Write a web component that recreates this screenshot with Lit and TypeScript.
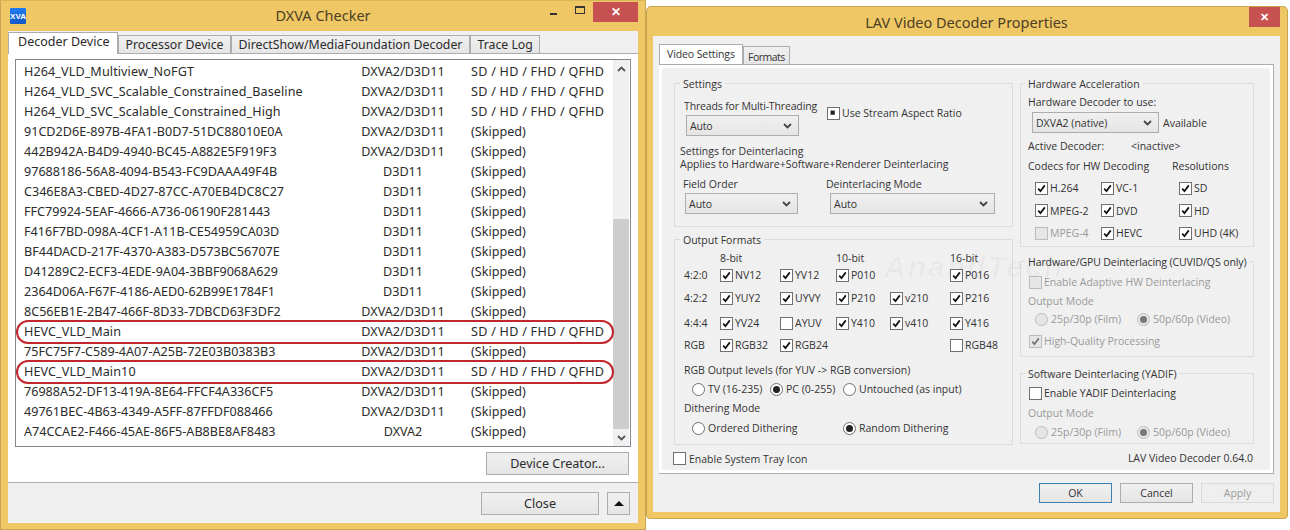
import { LitElement, html, css, svg } from "lit";
import { customElement } from "lit/decorators.js";

const listRows: [string, string, boolean, boolean?][] = [
  ["H264_VLD_Multiview_NoFGT", "DXVA2/D3D11", true],
  ["H264_VLD_SVC_Scalable_Constrained_Baseline", "DXVA2/D3D11", true],
  ["H264_VLD_SVC_Scalable_Constrained_High", "DXVA2/D3D11", true],
  ["91CD2D6E-897B-4FA1-B0D7-51DC88010E0A", "DXVA2/D3D11", false],
  ["442B942A-B4D9-4940-BC45-A882E5F919F3", "DXVA2/D3D11", false],
  ["97688186-56A8-4094-B543-FC9DAAA49F4B", "D3D11", false],
  ["C346E8A3-CBED-4D27-87CC-A70EB4DC8C27", "D3D11", false],
  ["FFC79924-5EAF-4666-A736-06190F281443", "D3D11", false],
  ["F416F7BD-098A-4CF1-A11B-CE54959CA03D", "D3D11", false],
  ["BF44DACD-217F-4370-A383-D573BC56707E", "D3D11", false],
  ["D41289C2-ECF3-4EDE-9A04-3BBF9068A629", "D3D11", false],
  ["2364D06A-F67F-4186-AED0-62B99E1784F1", "D3D11", false],
  ["8C56EB1E-2B47-466F-8D33-7DBCD63F3DF2", "DXVA2/D3D11", false],
  ["HEVC_VLD_Main", "DXVA2/D3D11", true, true],
  ["75FC75F7-C589-4A07-A25B-72E03B0383B3", "DXVA2/D3D11", false],
  ["HEVC_VLD_Main10", "DXVA2/D3D11", true, true],
  ["76988A52-DF13-419A-8E64-FFCF4A336CF5", "DXVA2/D3D11", false],
  ["49761BEC-4B63-4349-A5FF-87FFDF088466", "DXVA2/D3D11", false],
  ["A74CCAE2-F466-45AE-86F5-AB8BE8AF8483", "DXVA2", false],
];

const chev = (c = "#444") => html`<svg class="chev" width="9" height="6" viewBox="0 0 9 6"><path d="M1 1 L4.5 4.5 L8 1" fill="none" stroke=${c} stroke-width="1.8"/></svg>`;
const tick = svg`<path d="M2.6 6.6 L5.3 9.6 L10.4 2.8" fill="none" stroke="currentColor" stroke-width="2"/>`;

type CbState = "on" | "off" | "dis" | "dison";
const cb = (label: string, state: CbState = "on") => html`<span class="cb ${state === "dis" || state === "dison" ? "disabled" : ""}">
  <svg class="box ${state}" width="13" height="13" viewBox="0 0 13 13">${state === "on" || state === "dison" ? tick : ""}</svg><span>${label}</span></span>`;
const radio = (label: string, on = false, dis = false) => html`<span class="rd ${dis ? "disabled" : ""}">
  <span class="dot ${on ? "on" : ""}"></span><span>${label}</span></span>`;
const select = (text: string, cls: string) => html`<span class="select ${cls}"><span>${text}</span>${chev()}</span>`;

@customElement("dxva-window")
class DxvaWindow extends LitElement {
  static styles = css`
    :host { display: block; position: absolute; left: 0; top: 0; width: 646px; height: 530px; box-sizing: border-box;
      background: #efc764; border: 1px solid #c9a552; border-top-color: #d9b65c; border-bottom: 1px solid #c9a552;
      font-family: "Noto Sans", sans-serif; color: #2b2b2b; font-size: 12.6px; padding: 0 7px 6px 7px; }
    .title { height: 30px; box-sizing: border-box; padding-bottom: 2px; display: flex; align-items: center; justify-content: center; font-size: 14.5px; color: #4d4126; position: relative; }
    .app { position: absolute; left: 2px; top: 7px; width: 16px; height: 16px; background: linear-gradient(#1c7df0, #1456c8); color: #fff; font: bold 8px "Liberation Sans", sans-serif; display: flex; align-items: center; justify-content: center; border-radius: 1px; }
    .ctrls { position: absolute; right: 0; top: 1px; display: flex; align-items: center; height: 20px; }
    .min { width: 7px; height: 2px; background: #333; margin: 3px 18px 0 0; }
    .max { width: 10px; height: 8px; box-sizing: border-box; border: 1px solid #333; border-top-width: 2px; margin: -4px 8px 0 0; }
    .close { width: 45px; height: 20px; background: #c75050; color: #fff; font: bold 12px "Liberation Sans", sans-serif; display: flex; align-items: center; justify-content: center; }
    .content { background: #f0f0f0; height: 492px; display: flex; flex-direction: column; }
    .tabs { height: 22px; display: flex; align-items: flex-end; background: #f0f0f0; margin-top: 1px; font-size: 12.3px; }
    .tab { height: 19px; padding: 0 6.5px 2px; display: flex; align-items: center; background: linear-gradient(#f0f0f0, #e5e5e5); border: 1px solid #acacac; border-bottom: none; box-sizing: border-box; white-space: nowrap; }
    .tab.active { height: 22px; width: 110px; background: #fff; padding: 0 0 5px 9px; font-size: 12.5px; position: relative; z-index: 1; }
    .panel { flex: none; height: 430px; box-sizing: border-box; background: #fff; border-top: 1px solid #acacac; border-bottom: 1px solid #acacac; padding: 5px 7px 0 7px; margin-top: -1px; }
    .list { height: 388px; box-sizing: border-box; border: 1px solid #828790; display: flex; background: #fff; }
    .rows { flex: 1; padding: 2px 0 0 0; }
    .row { height: 20px; display: grid; grid-template-columns: 337px 84px 1fr; padding-left: 8px; align-items: center; position: relative; line-height: 20px; white-space: nowrap; }
    .row > :nth-child(2) { text-align: center; }
    .row > :nth-child(3) { padding-left: 26px; }
    .row.named > :first-child { letter-spacing: .1px; }
    .ok { letter-spacing: .25px; }
    .row.mark::after { content: ""; position: absolute; left: 0; right: -1px; top: -2px; bottom: -2px; border: 2px solid #c1272d; border-radius: 12px; }
    .sb { width: 16px; margin: 0 1px 0 0; background: #f0f0f0; display: flex; flex-direction: column; }
    .sb .arrow { height: 17px; display: flex; align-items: center; justify-content: center; }
    .sb .space { height: 142px; }
    .sb .thumb { flex: 1; background: #cdcdcd; }
    .btnrow { display: flex; justify-content: flex-end; padding: 5px 2px 0 0; }
    .btn { display: flex; align-items: center; justify-content: center; box-sizing: border-box; height: 23px; border: 1px solid #adadad; background: linear-gradient(#f0f0f0, #e5e5e5); }
    .creator { width: 143px; }
    .footer { flex: 1; display: flex; justify-content: flex-end; gap: 8px; padding: 9px 8px 0 0; }
    .closebtn { width: 118px; }
    .up { width: 23px; }
    .tri { width: 0; height: 0; border-left: 5px solid transparent; border-right: 5px solid transparent; border-bottom: 5px solid #111; }
  `;
  render() {
    return html`
      <div class="title"><span class="app">XVA</span>DXVA Checker
        <span class="ctrls"><span class="min"></span><span class="max"></span><span class="close">✕</span></span></div>
      <div class="content">
        <div class="tabs"><span class="tab active">Decoder Device</span><span class="tab">Processor Device</span><span class="tab">DirectShow/MediaFoundation Decoder</span><span class="tab">Trace Log</span></div>
        <div class="panel">
          <div class="list">
            <div class="rows">${listRows.map(([n, t, ok, m]) => html`<div class="row ${m ? "mark" : ""} ${ok ? "named" : ""}"><span>${n}</span><span>${t}</span><span class=${ok ? "ok" : ""}>${ok ? "SD / HD / FHD / QFHD" : "(Skipped)"}</span></div>`)}</div>
            <div class="sb">
              <div class="arrow"><svg width="9" height="6" viewBox="0 0 9 6"><path d="M1 5 L4.5 1.5 L8 5" fill="none" stroke="#555" stroke-width="1.8"/></svg></div>
              <div class="space"></div><div class="thumb"></div>
              <div class="arrow">${chev("#555")}</div>
            </div>
          </div>
          <div class="btnrow"><span class="btn creator">Device Creator...</span></div>
        </div>
        <div class="footer"><span class="btn closebtn">Close</span><span class="btn up"><span class="tri"></span></span></div>
      </div>`;
  }
}

@customElement("lav-window")
class LavWindow extends LitElement {
  static styles = css`
    :host { display: block; position: absolute; left: 646px; top: 6px; width: 642px; height: 513px; box-sizing: border-box;
      background: #efc764; border: 1px solid #c9a552; border-radius: 5px 5px 4px 4px; padding: 0 7px 6px 6px;
      font-family: "Open Sans", sans-serif; color: #333; font-size: 10.5px; }
    .title { height: 29px; display: flex; align-items: center; justify-content: center; font-size: 14.5px; font-family: "Noto Sans", sans-serif; color: #4d4126; position: relative; }
    .x { position: absolute; right: 0; top: 0; width: 31px; height: 20px; background: #c75050; color: #fff; font: bold 11px "Liberation Sans", sans-serif; display: flex; align-items: center; justify-content: center; }
    .content { background: #f0f0f0; height: 476px; box-sizing: border-box; padding: 8px 6px 0 6px; display: flex; flex-direction: column; }
    .tabs { height: 21px; display: flex; align-items: flex-end; }
    .tab { height: 19px; padding: 1px 4px 0; display: flex; align-items: center; border: 1px solid #acacac; border-bottom: none; box-sizing: border-box; background: linear-gradient(#f0f0f0, #e5e5e5); letter-spacing: -.5px; }
    .tab.active { height: 21px; width: 84px; background: #fff; padding: 0 0 3px 7px; letter-spacing: -.1px; }
    .panel { height: 410px; box-sizing: border-box; border: 1px solid #acacac; border-width: 1px 1px 1px 0; background: #f0f0f0; box-shadow: inset 0 0 0 3px #fff; margin-top: -1px; padding: 18px 19px 0 15px; position: relative; width: 615px; }
    .cols { display: grid; grid-template-columns: 339px 234px; column-gap: 7px; }
    .col { display: flex; flex-direction: column; }
    fieldset { margin: 0; padding: 0; border: 1px solid #dcdcdc; box-sizing: border-box; min-width: 0; }
    legend { padding: 0 3px; line-height: 14px; height: 12px; white-space: nowrap; }
    .g-settings { height: 150px; padding: 7px 0 0 5px; margin-top: -6px; }
    .g-settings legend { margin-left: 0; }
    .g-output { height: 212px; margin-top: 6px; padding: 0 0 0 9px; }
    .g-output legend { margin-left: -4px; }
    .g-hw { height: 170px; padding: 6px 0 0 7px; margin-top: -6px; }
    .g-gpu { height: 102px; margin-top: 8px; padding: 8px 0 0 7px; }
    .g-gpu legend { letter-spacing: -.1px; }
    .g-soft { height: 77px; margin-top: 10px; padding: 7px 0 0 7px; }
    .g-hw legend, .g-gpu legend, .g-soft legend { margin-left: -3px; }
    .cb, .rd { display: inline-flex; align-items: center; white-space: nowrap; gap: 2px; line-height: 14px; }
    .box { flex: none; background: #fff; border: 1px solid #707070; box-sizing: border-box; color: #111; }
    .box.dis, .box.dison { background: #e6e6e6; border-color: #bcbcbc; color: #777; }
    .dot { flex: none; width: 13px; height: 13px; box-sizing: border-box; border: 1px solid #707070; border-radius: 50%; background: #fff; display: inline-flex; align-items: center; justify-content: center; margin-right: 1px; }
    .dot.on::after { content: ""; width: 7px; height: 7px; border-radius: 50%; background: #222; }
    .disabled { color: #9a9a9a; }
    .disabled .dot { border-color: #bcbcbc; background: #e6e6e6; }
    .disabled .dot.on::after { background: #777; }
    .select { display: flex; align-items: center; justify-content: space-between; box-sizing: border-box; height: 21px; border: 1px solid #adadad; background: linear-gradient(#f0f0f0, #e5e5e5); padding: 0 6px 0 3px; }
    .s113 { width: 113px; } .s165 { width: 165px; } .s127 { width: 127px; }
    /* settings */
    .s-top { display: grid; grid-template-columns: 143px auto; height: 46px; padding-left: 4px; }
    .s-top > div:first-child { display: flex; flex-direction: column; gap: 2px; margin-top: 3px; letter-spacing: -.15px; }
    .indent { margin-left: 2px; }
    .indent2 { margin-left: 4px; }
    .s-top .cb { margin-top: 10px; }
    .s-note { margin: 3px 0 0 0; line-height: 13px; height: 26px; }
    .s-bot { display: grid; grid-template-columns: 143px auto; padding-left: 3px; margin-top: 6px; line-height: 14px; row-gap: 2px; }
    /* output */
    .fmt { display: grid; grid-template-columns: 36px 60px 56px 54px 60px 1fr; height: 102px; grid-template-rows: 12px 22px 24px 26px 18px; align-items: center; margin-top: 7px; }
    .line { line-height: 14px; }
    .radios { position: relative; display: grid; height: 14px; align-items: center; padding-left: 8px; }
    .r3 { grid-template-columns: 78px 73px 1fr; }
    .r2 { grid-template-columns: 151px 1fr; }
    .o1 { margin-top: 9px; } .o2 { margin-top: 5px; } .o3 { margin-top: 5px; } .o4 { margin-top: 6px; }
    /* hw */
    .codec { display: grid; grid-template-columns: 66px 78px 1fr; grid-auto-rows: 22.5px; padding-left: 7px; margin-top: 4px; align-items: center; }
    .active { display: grid; grid-template-columns: 103px 1fr; margin-top: 6px; line-height: 14px; }
    .codecs-h { display: grid; grid-template-columns: 144px 1fr; margin-top: 6px; line-height: 14px; }
    .hw-sel { display: flex; align-items: center; gap: 4px; margin: 3px 0 0 4px; }
    .mode { padding-left: 7px; display: grid; grid-template-columns: 102px 1fr; height: 14px; align-items: center; }
    .chk { height: 14px; margin-left: 1px; }
    .om5 { margin-top: 5px; } .om6 { margin-top: 6px; }
    .m4 { margin-top: 4px; } .m5 { margin-top: 5px; }
    .hq { margin-top: 8px; }
    .lav { text-align: right; line-height: 14px; margin-top: 7px; padding-right: 1px; }
    .tray { position: absolute; left: 14px; bottom: 5px; }
    .tray .cb { gap: 3px; }
    .mark-wm { position: absolute; left: 225px; top: 185px; font: italic bold 30px "Liberation Sans", sans-serif; color: rgba(0,0,0,.028); pointer-events: none; letter-spacing: 2px; white-space: nowrap; }
    .footer { display: flex; justify-content: flex-end; gap: 8px; margin-top: 9px; }
    .btn { width: 73px; height: 20px; box-sizing: border-box; border: 1px solid #adadad; background: linear-gradient(#f0f0f0, #e5e5e5); display: flex; align-items: center; justify-content: center; }
    .btn.ok { border-color: #3c7fb1; }
    .btn.dim { color: #9a9a9a; border-color: #d9d9d9; background: #efefef; }
  `;
  render() {
    return html`
      <div class="title">LAV Video Decoder Properties<span class="x">✕</span></div>
      <div class="content">
        <div class="tabs"><span class="tab active">Video Settings</span><span class="tab">Formats</span></div>
        <div class="panel">
          <div class="cols">
            <div class="col">
              <fieldset class="g-settings"><legend>Settings</legend>
                <div class="s-top"><div><span>Threads for Multi-Threading</span><span class="indent">${select("Auto", "s113")}</span></div>
                  <span>
                    <span class="cb">
                      <svg class="box" width="13" height="13" viewBox="0 0 13 13"><rect x="3" y="3" width="5" height="5" fill="#222"/></svg>
                      <span>Use Stream Aspect Ratio</span></span></span></div>
                <div class="s-note">Settings for Deinterlacing<br>Applies to Hardware+Software+Renderer Deinterlacing</div>
                <div class="s-bot"><span>Field Order</span><span>Deinterlacing Mode</span>
                  <span class="indent">${select("Auto", "s113")}</span><span class="indent2">${select("Auto", "s165")}</span></div>
              </fieldset>
              <fieldset class="g-output"><legend>Output Formats</legend>
                <div class="fmt">
                  <span></span><span>8-bit</span><span></span><span>10-bit</span><span></span><span>16-bit</span>
                  <span>4:2:0</span>${cb("NV12")}${cb("YV12")}${cb("P010")}<span></span>${cb("P016")}
                  <span>4:2:2</span>${cb("YUY2")}${cb("UYVY")}${cb("P210")}${cb("v210")}${cb("P216")}
                  <span>4:4:4</span>${cb("YV24")}${cb("AYUV", "off")}${cb("Y410")}${cb("v410")}${cb("Y416")}
                  <span>RGB</span>${cb("RGB32")}${cb("RGB24")}<span></span><span></span>${cb("RGB48", "off")}
                </div>
                <div class="line o1">RGB Output levels (for YUV -&gt; RGB conversion)</div>
                <div class="radios r3 o2">${radio("TV (16-235)")}${radio("PC (0-255)", true)}${radio("Untouched (as input)")}</div>
                <div class="line o3">Dithering Mode</div>
                <div class="radios r2 o4">${radio("Ordered Dithering")}${radio("Random Dithering", true)}</div>
              </fieldset>
            </div>
            <div class="col">
              <fieldset class="g-hw"><legend>Hardware Acceleration</legend>
                <div class="line">Hardware Decoder to use:</div>
                <div class="hw-sel">${select("DXVA2 (native)", "s127")}<span>Available</span></div>
                <div class="active"><span>Active Decoder:</span><span>&lt;inactive&gt;</span></div>
                <div class="codecs-h"><span>Codecs for HW Decoding</span><span>Resolutions</span></div>
                <div class="codec">
                  ${cb("H.264")}${cb("VC-1")}${cb("SD")}
                  ${cb("MPEG-2")}${cb("DVD")}${cb("HD")}
                  ${cb("MPEG-4", "dis")}${cb("HEVC")}${cb("UHD (4K)")}
                </div>
              </fieldset>
              <fieldset class="g-gpu"><legend>Hardware/GPU Deinterlacing (CUVID/QS only)</legend>
                <div class="chk">${cb("Enable Adaptive HW Deinterlacing", "dis")}</div>
                <div class="line disabled om5">Output Mode</div>
                <div class="mode m4">${radio("25p/30p (Film)", false, true)}${radio("50p/60p (Video)", true, true)}</div>
                <div class="chk hq">${cb("High-Quality Processing", "dison")}</div>
              </fieldset>
              <fieldset class="g-soft"><legend>Software Deinterlacing (YADIF)</legend>
                <div class="chk">${cb("Enable YADIF Deinterlacing", "off")}</div>
                <div class="line disabled om6">Output Mode</div>
                <div class="mode m5">${radio("25p/30p (Film)", false, true)}${radio("50p/60p (Video)", true, true)}</div>
              </fieldset>
              <div class="lav">LAV Video Decoder 0.64.0</div>
            </div>
          </div>
          <span class="tray">${cb("Enable System Tray Icon", "off")}</span>
          <span class="mark-wm">AnandTech</span>
        </div>
        <div class="footer"><span class="btn ok">OK</span><span class="btn">Cancel</span><span class="btn dim">Apply</span></div>
      </div>`;
  }
}

@customElement("app-root")
export class AppRoot extends LitElement {
  static styles = css`
    :host { display: block; position: relative; width: 1290px; height: 530px; background: #fff; overflow: hidden; }
  `;
  render() {
    return html`<dxva-window></dxva-window><lav-window></lav-window>`;
  }
}
void DxvaWindow; void LavWindow;
